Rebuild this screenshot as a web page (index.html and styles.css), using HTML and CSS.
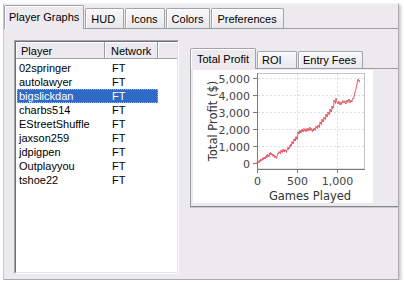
FILE: index.html
```html
<!DOCTYPE html>
<html lang="en">
<head>
    <meta charset="UTF-8">
    <title>Player Graphs</title>
    <link rel="stylesheet" href="styles.css">
</head>
<body>
    <div class="window">
        <!-- Pestañas principales -->
        <div class="tabs">
            <div class="tab active">Player Graphs</div>
            <div class="tab hud">HUD</div>
            <div class="tab">Icons</div>
            <div class="tab">Colors</div>
            <div class="tab">Preferences</div>
        </div>

        <div class="tab-body">
            <div class="player-list">
                <div class="list-inner">
                    <div class="list-head">
                        <div class="head-cell col-player">Player</div>
                        <div class="head-cell col-net">Network</div>
                        <div class="head-cell col-fill"></div>
                    </div>
                    <div class="list-rows">
                        <div class="row"><span class="cell-player">02springer</span><span class="cell-net">FT</span></div>
                        <div class="row"><span class="cell-player">autolawyer</span><span class="cell-net">FT</span></div>
                        <div class="row selected"><span class="cell-player">bigslickdan</span><span class="cell-net">FT</span></div>
                        <div class="row"><span class="cell-player">charbs514</span><span class="cell-net">FT</span></div>
                        <div class="row"><span class="cell-player">EStreetShuffle</span><span class="cell-net">FT</span></div>
                        <div class="row"><span class="cell-player">jaxson259</span><span class="cell-net">FT</span></div>
                        <div class="row"><span class="cell-player">jdpigpen</span><span class="cell-net">FT</span></div>
                        <div class="row"><span class="cell-player">Outplayyou</span><span class="cell-net">FT</span></div>
                        <div class="row"><span class="cell-player">tshoe22</span><span class="cell-net">FT</span></div>
                    </div>
                </div>
            </div>

            <div class="graph-panel">
                <div class="tabs small">
                    <div class="tab active">Total Profit</div>
                    <div class="tab roi">ROI</div>
                    <div class="tab">Entry Fees</div>
                </div>
                <div class="graph-body">
                    <svg class="chart" width="180" height="133" viewBox="0 0 180 133">
                        <rect x="0" y="0" width="180" height="133" fill="#fff"/>
                        <g stroke="#dcdcdc" stroke-dasharray="2 2" fill="none">
                            <path d="M65 8.5H172M65 25.5H172M65 42.5H172M65 59.5H172M65 76.5H172"/>
                            <path d="M104.5 4V99M144.5 4V99"/>
                        </g>
                        <rect x="64.5" y="3.5" width="107" height="95.5" fill="none" stroke="#c4c4c4"/>
                        <path d="M64.5 3V99.5H172" fill="none" stroke="#7c7c7c"/>
                        <path d="M60 8.5H64M60 25.5H64M60 42.5H64M60 59.5H64M60 76.5H64M60 93.5H64M64.5 100V103M104.5 100V103M144.5 100V103" stroke="#7c7c7c"/>
                        <polyline fill="none" stroke="#e35b66" stroke-width="1" points="64,93 64.5,90.5 65,92 65.5,91 66,93 66.5,90 67,91.5 67.5,89 68,91 68.5,89.5 69,90.5 69.5,88 70,90 70.5,87.5 71,89 71.5,87 72,89 72.5,86.5 73,88 73.5,85 74,87.5 74.5,84 75,86 75.5,85 76,87 76.5,83 77,85 77.5,82.5 78,84.5 78.5,83 79,85 79.5,84 80,86.5 80.5,84.5 81,86 81.5,85 82,88 82.5,86 83,87 83.5,88.5 84,86 84.5,85 85,83 85.5,84 86,81.5 86.5,83 87,82 87.5,84 88,80 88.5,82 89,80.5 89.5,82.5 90,79 90.5,81.5 91,80 91.5,82 92,79.5 92.5,81 93,80 93.5,82.5 94,80 94.5,79 95,77.5 95.5,79.5 96,77 96.5,78.5 97,75 97.5,77 98,74 98.5,76 99,71.5 99.5,74 100,72 100.5,73.5 101,69 101.5,71 102,68.5 102.5,71 103,66.5 103.5,69 104,67 104.5,69.5 105,62 105.5,64 106,61.5 106.5,63.5 107,60 107.5,63 108,61 108.5,62.5 109,59 109.5,61.5 110,60 110.5,62 111,58.5 111.5,60.5 112,59.5 112.5,61.5 113,58.5 113.5,60 114,61.5 114.5,59 115,58 115.5,60.5 116,59 116.5,60.5 117,57 117.5,59.5 118,60.5 118.5,58.5 119,60 119.5,62 120,59 120.5,61 121,58 121.5,60 122,58.5 122.5,60.5 123,56 123.5,58 124,57 124.5,58.5 125,55 125.5,57 126,55.5 126.5,57.5 127,52 127.5,54 128,52.5 128.5,54.5 129,49 129.5,51.5 130,50 130.5,52 131,47 131.5,49 132,48 132.5,49.5 133,44 133.5,46.5 134,45 134.5,47 135,42 135.5,44 136,43 136.5,45 137,39 137.5,41.5 138,40 138.5,42 139,36 139.5,38.5 140,37 140.5,38 141,30 141.5,32 142,31 142.5,33.5 143,28 143.5,30.5 144,32 144.5,33 145,34 145.5,31.5 146,31 146.5,33 147,35 147.5,33 148,32 148.5,34.5 149,33.5 149.5,31 150,30.5 150.5,32.5 151,33 151.5,31 152,31 152.5,33 153,34 153.5,31.5 154,30 154.5,32 155,32.5 155.5,30 156,29 156.5,31.5 157,33 157.5,31 158,30 158.5,32 159,31.5 159.5,29.5 160,28 160.5,29 161,27 161.5,24 162,22 162.5,20.5 163,19 163.5,16 164,14 164.5,11 165,9 165.5,11 166,10 166.5,12 167,12"/>
                        <g class="tick-label" text-anchor="end">
                            <text x="57" y="12.5">5,000</text>
                            <text x="57" y="29.5">4,000</text>
                            <text x="57" y="46.5">3,000</text>
                            <text x="57" y="63.5">2,000</text>
                            <text x="57" y="80.5">1,000</text>
                            <text x="57" y="97.5">0</text>
                        </g>
                        <g class="tick-label" text-anchor="middle">
                            <text x="64.5" y="115">0</text>
                            <text x="104.5" y="115">500</text>
                            <text x="144.5" y="115">1,000</text>
                        </g>
                        <text class="axis-label" x="117" y="130" text-anchor="middle">Games Played</text>
                        <text class="axis-label" transform="translate(24 51) rotate(-90)" text-anchor="middle">Total Profit ($)</text>
                    </svg>
                </div>
            </div>
        </div>
    </div>
</body>
</html>
```

FILE: styles.css
```css
* {
    margin: 0;
    padding: 0;
    box-sizing: border-box;
}

body {
    background-color: #fff;
    font-family: "Liberation Sans", Arial, sans-serif;
    font-size: 11px;
    color: #000;
}

.window {
    margin: 3px 0 0 3px;
    width: 396px;
    height: 277px;
    background-color: #ECEAEF;
    border: 1px solid #ABAAAF;
    border-top-color: #F6F5F8;
    border-left-color: #C9C8CD;
    box-shadow: 2px 2px 3px rgba(0, 0, 0, 0.22);
    display: flex;
    flex-direction: column;
}

/* Pestañas */
.tabs {
    display: flex;
    align-items: flex-end;
    height: 25px;
    border-bottom: 1px solid #9C9BA0;
}

.tab {
    position: relative;
    height: 20px;
    margin-right: 1px;
    padding: 2px 6px 0 5px;
    line-height: 16px;
    border: 1px solid #A4A3A8;
    border-bottom: none;
    border-radius: 2px 2px 0 0;
    background: linear-gradient(#F8F7FA, #E9E8EC);
    box-shadow: inset 1px 1px 0 #fff;
    white-space: nowrap;
}

.tab.hud {
    min-width: 39px;
}

.tab.active {
    height: 24px;
    margin-bottom: -1px;
    padding: 0 4px;
    line-height: 22px;
    background: #ECEAEF;
    z-index: 2;
}

.tabs.small {
    height: 20px;
    border-bottom: none;
}

.tabs.small .tab {
    height: 17px;
    padding: 1px 6px 0 4px;
    line-height: 15px;
}

.tabs.small .tab.active {
    height: 21px;
    padding: 0 6px;
    line-height: 20px;
}

.tabs.small .roi {
    min-width: 40px;
}

/* Contenido */
.tab-body {
    flex: 1;
    display: flex;
    gap: 11px;
    padding: 11px 0 0 10px;
}

.player-list {
    width: 165px;
    height: 234px;
    border: 1px solid;
    border-color: #A6A5AA #FBFBFC #FBFBFC #A6A5AA;
}

.list-inner {
    height: 100%;
    background-color: #fff;
    border: 1px solid;
    border-color: #707074 #E4E3E7 #E4E3E7 #707074;
}

.list-head {
    display: flex;
    height: 17px;
    background-color: #ECEAEF;
    border-bottom: 1px solid #A4A3A8;
}

.head-cell {
    padding: 2px 0 0 5px;
    line-height: 14px;
    border-right: 1px solid #9C9BA0;
    box-shadow: inset 1px 1px 0 #fff;
}

.col-player { width: 89px; }
.col-net { width: 53px; padding-left: 6px; }
.col-fill { flex: 1; border-right: none; }

.list-rows {
    padding-top: 2px;
}

.row {
    display: flex;
    width: 141px;
    height: 14px;
    margin-left: 1px;
    line-height: 14px;
}

.row.selected {
    background-color: #316AC5;
    color: #fff;
    outline: 1px dotted #8FB0E6;
    outline-offset: -1px;
}

.cell-player {
    width: 88px;
    padding-left: 2px;
}

.cell-net {
    padding-left: 7px;
}

.graph-panel {
    flex: 1;
    margin-top: 8px;
}

.graph-body {
    height: 139px;
    padding: 1px 0 0 2px;
    border: 1px solid #9C9BA0;
    border-right: none;
    border-bottom-color: #88878C;
    box-shadow: 0 1px 0 #C8C7CC;
}

.chart {
    display: block;
}

.tick-label {
    font-family: "DejaVu Sans", sans-serif;
    font-size: 11px;
    fill: #444;
}

.axis-label {
    font-family: "DejaVu Sans", sans-serif;
    font-size: 11.5px;
    fill: #333;
}
```
